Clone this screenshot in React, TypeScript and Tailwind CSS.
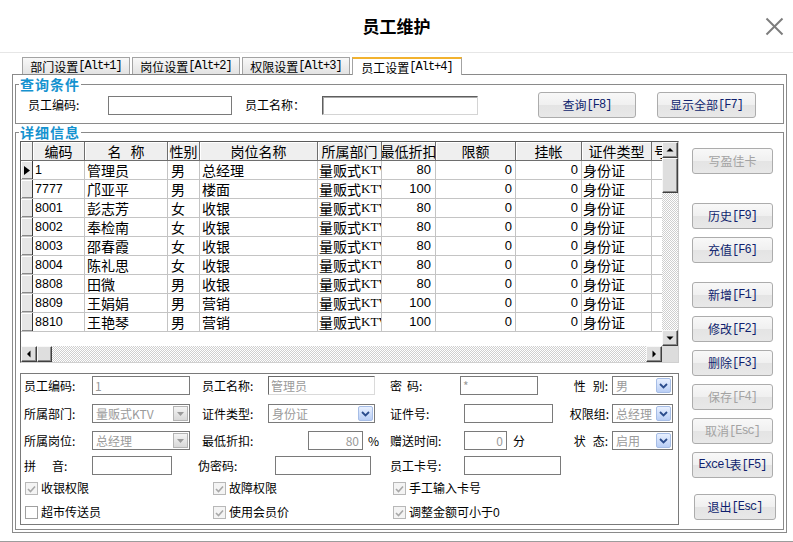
import React from "react";

const SANS = "font-['Liberation_Sans','Noto_Sans_CJK_SC',sans-serif]";
const MONO = "font-['Liberation_Mono',monospace]";
const CJKF = "font-['Noto_Sans_CJK_SC',sans-serif]";

function Mixed({ t }: { t: string }) {
  const parts = t.split(/([\x20-\x7E]+)/).filter(Boolean);
  return (
    <>
      {parts.map((p, i) =>
        /^[\x20-\x7E]+$/.test(p) ? (
          <span key={i} className={`${MONO} text-[12px] tracking-[-1px]`}>
            {p}
          </span>
        ) : (
          <span key={i} className={`${CJKF} text-[12px]`}>
            {p}
          </span>
        )
      )}
    </>
  );
}

function Btn({ label, disabled, className }: { label: string; disabled?: boolean; className?: string }) {
  return (
    <div
      className={`flex h-[26px] shrink-0 items-center justify-center rounded-[3px] border border-[#acacac] bg-[linear-gradient(#f8f8f8_0%,#f0f0f0_48%,#e4e4e4_52%,#e8e8e8_100%)] leading-[16px] ${
        disabled ? "text-[#a3a3a3]" : "text-[#0f1f6e]"
      } ${className ?? ""}`}
    >
      <Mixed t={label} />
    </div>
  );
}

function Arrow({ dir }: { dir: "up" | "down" | "left" | "right" }) {
  const pts =
    dir === "up"
      ? "0.5,5.5 7.5,5.5 4,2"
      : dir === "down"
      ? "0.5,2.5 7.5,2.5 4,6"
      : dir === "left"
      ? "5.5,0.5 5.5,7.5 2,4"
      : "2.5,0.5 2.5,7.5 6,4";
  return (
    <svg width="8" height="8" viewBox="0 0 8 8">
      <polygon points={pts} fill="#000" />
    </svg>
  );
}

function SBtn({ dir }: { dir: "up" | "down" | "left" | "right" }) {
  return (
    <div className="flex h-[16px] w-[16px] shrink-0 items-center justify-center border border-b-[#404040] border-l-[#f8f8f8] border-r-[#404040] border-t-[#f8f8f8] bg-[#dedede] shadow-[inset_-1px_-1px_0_#8a8a8a]">
      <Arrow dir={dir} />
    </div>
  );
}

function Thumb({ className }: { className: string }) {
  return (
    <div
      className={`shrink-0 border border-b-[#404040] border-l-[#f8f8f8] border-r-[#404040] border-t-[#f8f8f8] bg-[#dedede] shadow-[inset_-1px_-1px_0_#8a8a8a] ${className}`}
    />
  );
}

const CHECKER =
  "bg-[repeating-conic-gradient(#cfcfcf_0%_25%,#ffffff_0%_50%)] bg-[length:2px_2px]";

const colW = [
  "w-[52px]",
  "w-[83px]",
  "w-[32px]",
  "w-[118px]",
  "w-[64px]",
  "w-[54px]",
  "w-[80px]",
  "w-[66px]",
  "w-[70px]",
];

const rows = [
  ["1", "管理员", "男", "总经理", "80"],
  ["7777", "邝亚平", "男", "楼面", "100"],
  ["8001", "彭志芳", "女", "收银", "80"],
  ["8002", "奉检南", "女", "收银", "80"],
  ["8003", "邵春霞", "女", "收银", "80"],
  ["8004", "陈礼思", "女", "收银", "80"],
  ["8808", "田微", "男", "收银", "80"],
  ["8809", "王娟娟", "男", "营销", "100"],
  ["8810", "王艳琴", "男", "营销", "100"],
];

function HCell({ w, children, last }: { w: string; children?: React.ReactNode; last?: boolean }) {
  return (
    <div
      className={`flex h-full shrink-0 items-center justify-center overflow-hidden whitespace-nowrap bg-[#efefef] text-[14px] leading-[18px] shadow-[inset_1px_1px_0_#ffffff] ${
        last ? "" : "border-r border-[#6e6e6e]"
      } ${w} ${CJKF}`}
    >
      {children}
    </div>
  );
}

function DCell({ w, children, cls }: { w: string; children?: React.ReactNode; cls?: string }) {
  return (
    <div
      className={`flex h-full shrink-0 items-center overflow-hidden whitespace-nowrap border-r border-[#c4c4c4] leading-[18px] ${w} ${cls ?? ""}`}
    >
      {children}
    </div>
  );
}

function Grid() {
  return (
    <div className="flex h-[222px] w-[659px] flex-col border border-b-[#d0d0d0] border-l-[#5a5a5a] border-r-[#d0d0d0] border-t-[#5a5a5a] bg-white">
      <div className="flex h-[204px]">
        <div className="flex w-[641px] flex-col overflow-hidden">
          <div className="flex h-[19px] shrink-0 border-b border-[#6e6e6e]">
            <HCell w="w-[12px]" />
            <HCell w={colW[0]}>编码</HCell>
            <HCell w={colW[1]}>
              名<span className="w-[9px]" />称
            </HCell>
            <HCell w={colW[2]}>性别</HCell>
            <HCell w={colW[3]}>岗位名称</HCell>
            <HCell w={colW[4]}>所属部门</HCell>
            <HCell w={colW[5]}>最低折扣</HCell>
            <HCell w={colW[6]}>限额</HCell>
            <HCell w={colW[7]}>挂帐</HCell>
            <HCell w={colW[8]}>证件类型</HCell>
            <div className={`flex h-full w-[10px] shrink-0 items-center overflow-hidden whitespace-nowrap bg-[#efefef] pl-[2px] text-[14px] leading-[18px] ${CJKF}`}>
              号
            </div>
          </div>
          {rows.map((r, i) => (
            <div key={i} className="flex h-[19px] shrink-0 border-b border-[#c4c4c4] text-[14px]">
              <div className="flex h-full w-[12px] shrink-0 items-center justify-center border-r border-r-[#3a3a3a] bg-[#e6e6e6] shadow-[inset_1px_1px_0_#ffffff,inset_0_-1px_0_#8a8a8a]">
                {i === 0 && (
                  <svg width="6" height="9" viewBox="0 0 6 9">
                    <polygon points="0,0 6,4.5 0,9" fill="#000" />
                  </svg>
                )}
              </div>
              <DCell w={colW[0]} cls={`pl-[2px] text-[12.5px] ${SANS}`}>{r[0]}</DCell>
              <DCell w={colW[1]} cls={`pl-[2px] ${CJKF}`}>{r[1]}</DCell>
              <DCell w={colW[2]} cls={`pl-[3px] ${CJKF}`}>{r[2]}</DCell>
              <DCell w={colW[3]} cls={`pl-[2px] ${CJKF}`}>{r[3]}</DCell>
              <DCell w={colW[4]} cls={`pl-[1px] ${CJKF}`}>
                量贩式<span className="font-['Liberation_Serif',serif] text-[13px]">KTV</span>
              </DCell>
              <DCell w={colW[5]} cls={`justify-end pr-[4px] text-[13px] ${SANS}`}>{r[4]}</DCell>
              <DCell w={colW[6]} cls={`justify-end pr-[3px] text-[13px] ${SANS}`}>0</DCell>
              <DCell w={colW[7]} cls={`justify-end pr-[3px] text-[13px] ${SANS}`}>0</DCell>
              <DCell w={colW[8]} cls={`pl-[1px] ${CJKF}`}>身份证</DCell>
              <div className="h-full w-[10px] shrink-0" />
            </div>
          ))}
        </div>
        <div className="flex w-[16px] flex-col">
          <SBtn dir="up" />
          <Thumb className="h-[35px] w-[16px]" />
          <div className={`flex-1 ${CHECKER}`} />
          <SBtn dir="down" />
        </div>
      </div>
      <div className="flex h-[16px]">
        <SBtn dir="left" />
        <Thumb className="h-[16px] w-[15px]" />
        <div className={`flex-1 ${CHECKER}`} />
        <SBtn dir="right" />
        <div className="h-[16px] w-[16px] bg-[#dcdcdc]" />
      </div>
    </div>
  );
}

function Lbl({ children, cls }: { children: React.ReactNode; cls: string }) {
  return (
    <div className={`flex h-full shrink-0 items-center whitespace-nowrap text-[12px] leading-[16px] ${CJKF} ${cls}`}>
      {children}
    </div>
  );
}

function Inp({ cls, value, right, sunken }: { cls: string; value?: string; right?: boolean; sunken?: boolean }) {
  return (
    <div
      className={`flex h-[19px] shrink-0 items-center overflow-hidden whitespace-nowrap bg-white text-[12px] leading-[16px] text-[#9a9a9a] ${CJKF} ${
        sunken
          ? "border border-b-[#dadada] border-l-[#6a6a6a] border-r-[#dadada] border-t-[#6a6a6a]"
          : "border border-[#7a7a7a]"
      } ${right ? "justify-end pr-[3px]" : "pl-[2px]"} ${cls}`}
    >
      {value}
    </div>
  );
}

function Sel({ cls, value, disabled }: { cls: string; value: string; disabled?: boolean }) {
  return (
    <div
      className={`flex h-[19px] shrink-0 items-center border border-[#7a7a7a] bg-white text-[12px] leading-[16px] text-[#9a9a9a] ${CJKF} ${cls}`}
    >
      <div className="flex-1 overflow-hidden whitespace-nowrap pl-[3px]">{value}</div>
      {disabled ? (
        <div className="mr-[1px] flex h-[15px] w-[15px] items-center justify-center border border-[#b4b4b4] bg-linear-to-b from-[#f4f4f4] to-[#d8d8d8]">
          <svg width="7" height="4" viewBox="0 0 7 4">
            <polygon points="0,0 7,0 3.5,4" fill="#9a9a9a" />
          </svg>
        </div>
      ) : (
        <div className="mr-[1px] flex h-[15px] w-[15px] items-center justify-center rounded-[2px] border border-[#a6bde6] bg-linear-to-b from-[#e8f0ff] to-[#b9cef5]">
          <svg width="9" height="6" viewBox="0 0 9 6">
            <polyline points="1,1 4.5,4.5 8,1" fill="none" stroke="#2b4c8c" strokeWidth="1.8" />
          </svg>
        </div>
      )}
    </div>
  );
}

function Chk({ checked, label, cls }: { checked: boolean; label: string; cls: string }) {
  return (
    <div className={`flex h-full shrink-0 items-center ${cls}`}>
      <div
        className={`flex h-[13px] w-[13px] items-center justify-center border ${
          checked ? "border-[#b8b8b8] bg-[#f4f4f4]" : "border-[#a0a0a0] bg-white"
        }`}
      >
        {checked && (
          <svg width="9" height="8" viewBox="0 0 9 8">
            <polyline points="1,4 3.5,6.5 8,1.5" fill="none" stroke="#a8a8a8" strokeWidth="1.6" />
          </svg>
        )}
      </div>
      <span className={`ml-[3px] text-[12px] leading-[16px] ${SANS}`}>{label}</span>
    </div>
  );
}

function Form() {
  return (
    <div className="mt-[10px] flex h-[152px] w-[659px] flex-col border border-[#7a7a7a] pl-[3px]">
      <div className="mt-[2px] flex h-[19px]">
        <Lbl cls="w-[68px]">员工编码:</Lbl>
        <Inp cls="w-[98px]" value="1" />
        <Lbl cls="ml-[12px] w-[66px]">员工名称:</Lbl>
        <Inp cls="w-[107px]" value="管理员" sunken />
        <Lbl cls="ml-[15px] w-[70px]">
          密<span className="w-[5px]" />码:
        </Lbl>
        <Inp cls="w-[78px]" value="*" />
        <Lbl cls="w-[74px] justify-end pr-[4px]">
          性<span className="w-[7px]" />别:
        </Lbl>
        <Sel cls="w-[61px]" value="男" />
      </div>
      <div className="mt-[9px] flex h-[19px]">
        <Lbl cls="w-[68px]">所属部门:</Lbl>
        <Sel cls="w-[98px]" value="量贩式KTV" disabled />
        <Lbl cls="ml-[12px] w-[66px]">证件类型:</Lbl>
        <Sel cls="w-[107px]" value="身份证" />
        <Lbl cls="ml-[15px] w-[74px]">证件号:</Lbl>
        <Inp cls="w-[89px]" />
        <Lbl cls="w-[59px] justify-end pr-[3px]">权限组:</Lbl>
        <Sel cls="w-[61px]" value="总经理" />
      </div>
      <div className="mt-[8px] flex h-[19px]">
        <Lbl cls="w-[68px]">所属岗位:</Lbl>
        <Sel cls="w-[98px]" value="总经理" disabled />
        <Lbl cls="ml-[12px] w-[106px]">最低折扣:</Lbl>
        <Inp cls="w-[55px]" value="80" right />
        <Lbl cls={`w-[27px] pl-[5px] text-[11px] ${MONO}`}>%</Lbl>
        <Lbl cls="w-[74px]">赠送时间:</Lbl>
        <Inp cls="w-[43px]" value="0" right />
        <Lbl cls="w-[58px] pl-[6px]">分</Lbl>
        <Lbl cls="w-[47px] justify-end pr-[4px]">
          状<span className="w-[7px]" />态:
        </Lbl>
        <Sel cls="w-[61px]" value="启用" />
      </div>
      <div className="mt-[6px] flex h-[19px]">
        <Lbl cls="w-[68px]">
          拼<span className="w-[16px]" />音:
        </Lbl>
        <Inp cls="w-[80px]" />
        <Lbl cls="ml-[26px] w-[77px]">伪密码:</Lbl>
        <Inp cls="w-[96px]" />
        <Lbl cls="ml-[19px] w-[74px]">员工卡号:</Lbl>
        <Inp cls="w-[97px]" />
      </div>
      <div className="mt-[4px] flex h-[19px] pl-[1px]">
        <Chk checked label="收银权限" cls="w-[188px]" />
        <Chk checked label="故障权限" cls="w-[180px]" />
        <Chk checked label="手工输入卡号" cls="w-[180px]" />
      </div>
      <div className="mt-[5px] flex h-[19px] pl-[1px]">
        <Chk checked={false} label="超市传送员" cls="w-[188px]" />
        <Chk checked label="使用会员价" cls="w-[180px]" />
        <Chk checked label="调整金额可小于0" cls="w-[180px]" />
      </div>
    </div>
  );
}

export default function App() {
  const tabs = ["部门设置[Alt+1]", "岗位设置[Alt+2]", "权限设置[Alt+3]"];
  return (
    <div className={`flex h-[542px] w-[793px] flex-col overflow-hidden bg-white text-black ${SANS}`}>
      <div className="grid h-[53px] shrink-0 grid-cols-[1fr_auto_1fr] items-center border-b border-[#e6e6e6]">
        <div />
        <div className={`text-[17px] font-semibold leading-[20px] ${CJKF}`}>员工维护</div>
        <div className="flex justify-end pr-[9px]">
          <svg width="19" height="19" viewBox="0 0 19 19">
            <line x1="1.5" y1="1.5" x2="17.5" y2="17.5" stroke="#7c7c7c" strokeWidth="2" />
            <line x1="17.5" y1="1.5" x2="1.5" y2="17.5" stroke="#7c7c7c" strokeWidth="2" />
          </svg>
        </div>
      </div>

      <div className="mt-[4px] flex h-[17px] shrink-0 items-end gap-[2px] pl-[22px]">
        {tabs.map((t) => (
          <div
            key={t}
            className="flex h-[17px] w-[108px] shrink-0 items-center justify-center border border-b-0 border-[#a3a3a3] bg-linear-to-b from-[#f8f8f8] to-[#e3e3e3] leading-[15px]"
          >
            <Mixed t={t} />
          </div>
        ))}
        <div className="relative z-10 -mb-px flex h-[18px] w-[110px] shrink-0 items-center justify-center border border-b-0 border-t-2 border-[#a3a3a3] border-t-[#f2b22e] bg-white leading-[15px]">
          <Mixed t="员工设置[Alt+4]" />
        </div>
      </div>

      <div className="ml-[12px] h-[459px] w-[775px] shrink-0 border border-[#8a8a8a]">
        <fieldset className="ml-[2px] mt-[1px] h-[48px] w-[769px] border border-[#8a8a8a]">
          <legend className={`ml-[3px] px-[1px] text-[14px] font-bold leading-[16px] tracking-[1px] text-[#1592cf] ${CJKF}`}>
            查询条件
          </legend>
          <div className="flex h-[26px] items-center pl-[12px]">
            <Lbl cls="w-[80px]">员工编码:</Lbl>
            <Inp cls="w-[124px]" />
            <Lbl cls="ml-[13px] w-[77px]">员工名称：</Lbl>
            <div className="h-[19px] w-[156px] shrink-0 border border-b-[#d4d4d4] border-l-[#5e5e5e] border-r-[#d4d4d4] border-t-[#5e5e5e] bg-white shadow-[inset_1px_1px_0_#a8a8a8]" />
            <Btn label="查询[F8]" className="ml-[60px] w-[98px]" />
            <Btn label="显示全部[F7]" className="ml-[21px] w-[99px]" />
          </div>
        </fieldset>

        <fieldset className="ml-[2px] h-[406px] w-[769px] border border-[#8a8a8a]">
          <legend className={`ml-[3px] px-[1px] text-[14px] font-bold leading-[16px] tracking-[1px] text-[#1592cf] ${CJKF}`}>
            详细信息
          </legend>
          <div className="flex">
            <div className="ml-[4px] mt-[1px] flex flex-col">
              <Grid />
              <Form />
            </div>
            <div className="ml-[13px] flex w-[84px] flex-col">
              <Btn label="写盈佳卡" disabled className="mt-[8px] w-[81px]" />
              <Btn label="历史[F9]" className="mt-[29px] w-[81px]" />
              <Btn label="充值[F6]" className="mt-[8px] w-[81px]" />
              <Btn label="新增[F1]" className="mt-[19px] w-[81px]" />
              <Btn label="修改[F2]" className="mt-[8px] w-[81px]" />
              <Btn label="删除[F3]" className="mt-[8px] w-[81px]" />
              <Btn label="保存[F4]" disabled className="mt-[8px] w-[81px]" />
              <Btn label="取消[Esc]" disabled className="mt-[8px] w-[81px]" />
              <Btn label="Excel表[F5]" className="mt-[8px] w-[81px]" />
              <Btn label="退出[Esc]" className="ml-[2px] mt-[16px] w-[82px]" />
            </div>
          </div>
        </fieldset>
      </div>

      <div className="mt-auto h-[1px] shrink-0 bg-[#9c9c9c]" />
    </div>
  );
}
